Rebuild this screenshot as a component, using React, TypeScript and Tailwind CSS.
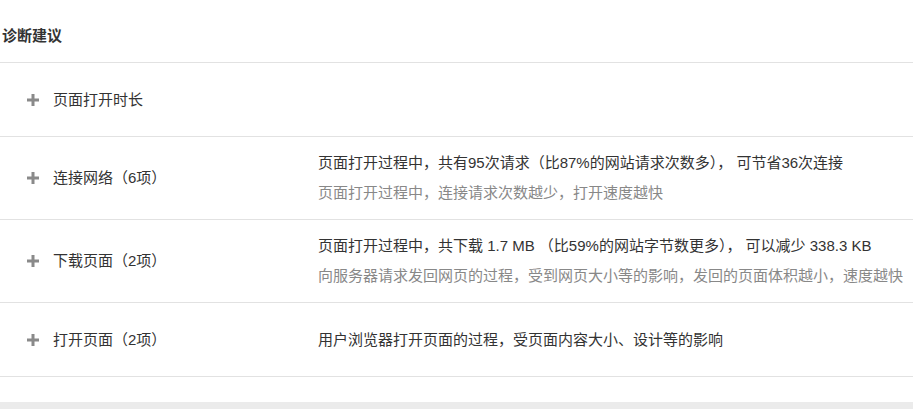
const FONT = "font-['Liberation_Sans','Noto_Sans_CJK_SC',sans-serif]"

interface Item {
  label: string
  lines: string[]
}

const ITEMS: Item[] = [
  { label: '页面打开时长', lines: [] },
  {
    label: '连接网络（6项）',
    lines: ['页面打开过程中，共有95次请求（比87%的网站请求次数多）， 可节省36次连接', '页面打开过程中，连接请求次数越少，打开速度越快'],
  },
  {
    label: '下载页面（2项）',
    lines: ['页面打开过程中，共下载 1.7 MB （比59%的网站字节数更多）， 可以减少 338.3 KB', '向服务器请求发回网页的过程，受到网页大小等的影响，发回的页面体积越小，速度越快'],
  },
  { label: '打开页面（2项）', lines: ['用户浏览器打开页面的过程，受页面内容大小、设计等的影响'] },
]

function PlusIcon() {
  return (
    <svg className="w-[12px] h-[12px] shrink-0" viewBox="0 0 12 12" fill="#8a8a8a">
      <rect x="0" y="4.5" width="12" height="3" />
      <rect x="4.5" y="0" width="3" height="12" />
    </svg>
  )
}

export default function App() {
  return (
    <div className={`w-[913px] h-[409px] bg-white overflow-hidden flex flex-col ${FONT}`}>
      <div className="h-[63px] shrink-0 flex items-center pt-[10px] pl-[2px] border-b border-[#e2e2e2]">
        <h2 className="text-[15px] font-bold text-[#333]">诊断建议</h2>
      </div>

      {ITEMS.map((item) => (
        <div key={item.label} className="flex items-center min-h-[74px] py-[11px] border-b border-[#e2e2e2] shrink-0">
          <div className="w-[318px] shrink-0 flex items-center gap-[14px] pl-[27px]">
            <PlusIcon />
            <span className="text-[15px] text-[#333] leading-[30px]">{item.label}</span>
          </div>
          {item.lines.length > 0 && (
            <div className="flex flex-col text-[15px] leading-[30px] whitespace-nowrap">
              <span className="text-[#333] whitespace-pre">{item.lines[0]}</span>
              {item.lines[1] && <span className="text-[#888]">{item.lines[1]}</span>}
            </div>
          )}
        </div>
      ))}

      <div className="h-[25px] shrink-0" />
      <div className="flex-1 bg-[#ebebeb]" />
    </div>
  )
}
